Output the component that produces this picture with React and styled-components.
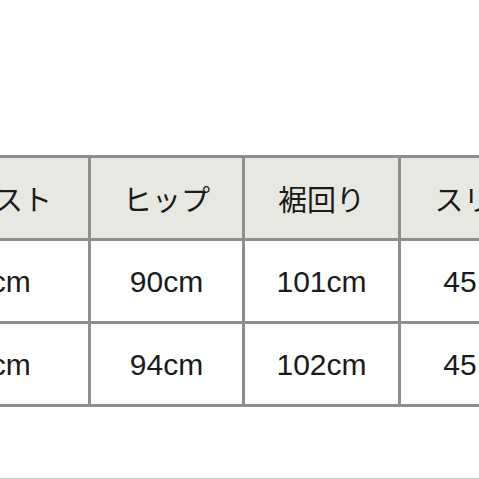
import React from "react";
import styled, { createGlobalStyle } from "styled-components";

const Global = createGlobalStyle`
  html, body {
    margin: 0;
    padding: 0;
    background: #ffffff;
    overflow: hidden;
  }
  body {
    font-family: "Liberation Sans", "Noto Sans CJK JP", sans-serif;
    color: #1c1c1c;
  }
`;

const Page = styled.div`
  width: 479px;
  height: 479px;
  overflow: hidden;
  display: flex;
  flex-direction: column;
  padding-top: 155px;
  box-sizing: border-box;
`;

const Grid = styled.div`
  display: grid;
  grid-template-columns: 188px 151px 153px 183px;
  grid-auto-rows: 80px;
  gap: 3px;
  padding: 3px;
  background: #8e8e8e;
  margin-left: -103px;
  width: max-content;
`;

const Cell = styled.div`
  background: ${(p) => (p.$head ? "#e8e8e2" : "#ffffff")};
  display: flex;
  align-items: center;
  justify-content: center;
  font-family: "Liberation Sans", "Noto Sans CJK JP", sans-serif;
  font-size: ${(p) => (p.$head ? "29px" : "30px")};
  color: #1a1a1a;
  white-space: nowrap;
  padding-top: ${(p) => (p.$head ? "0" : "2px")};
`;

const Divider = styled.div`
  margin-top: 71px;
  height: 1px;
  background: #c4c4c4;
`;

const headers = ["ウエスト", "ヒップ", "裾回り", "スリット"];
const rows = [
  ["70cm", "90cm", "101cm", "45.5cm"],
  ["74cm", "94cm", "102cm", "45.5cm"],
];

export default function App() {
  return (
    <>
      <Global />
      <Page>
        <Grid>
          {headers.map((h) => (
            <Cell key={h} $head>
              {h}
            </Cell>
          ))}
          {rows.map((r, i) =>
            r.map((v, j) => <Cell key={`${i}-${j}`}>{v}</Cell>)
          )}
        </Grid>
        <Divider />
      </Page>
    </>
  );
}
